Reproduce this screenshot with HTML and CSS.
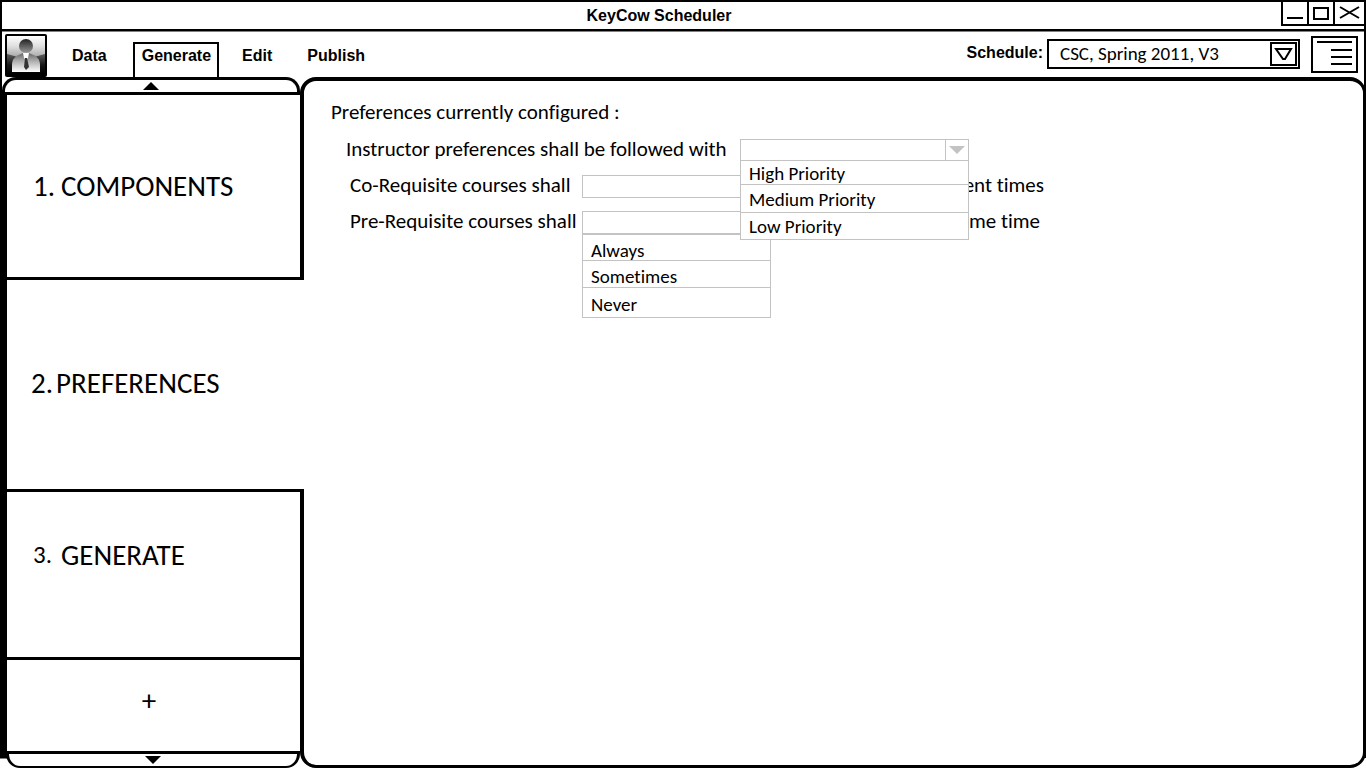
FILE: index.html
```html
<!DOCTYPE html>
<html lang="en">
<head>
<meta charset="utf-8">
<title>KeyCow Scheduler</title>
<link rel="stylesheet" href="styles.css">
</head>
<body>
<div class="app">
  <header class="titlebar">
    <h1 class="title">KeyCow Scheduler</h1>
    <div class="window-controls">
      <button class="window-button" type="button" aria-label="Minimize"><svg width="24" height="22" viewBox="0 0 24 22"><path d="M4 16h16" stroke="#000" stroke-width="2"/></svg></button>
      <button class="window-button" type="button" aria-label="Maximize"><svg width="24" height="22" viewBox="0 0 24 22"><path d="M5 6h14v11H5z" fill="none" stroke="#000" stroke-width="2"/></svg></button>
      <button class="window-button" type="button" aria-label="Close"><svg width="29" height="22" viewBox="0 0 29 22"><path d="M5 5l19 11M5 16L24 5" stroke="#000" stroke-width="2"/></svg></button>
    </div>
  </header>

  <div class="toolbar">
    <button class="user" type="button" aria-label="User">
      <svg width="42" height="43" viewBox="0 0 42 43">
        <defs>
          <linearGradient id="gloss" x1="0" y1="0" x2="0" y2="1"><stop offset="0" stop-color="#fff"/><stop offset=".5" stop-color="#ddd"/><stop offset="1" stop-color="#a5a5a5"/></linearGradient>
          <linearGradient id="dark" x1="0" y1="0" x2="0" y2="1"><stop offset="0" stop-color="#6a6a6a"/><stop offset=".6" stop-color="#151515"/><stop offset="1" stop-color="#000"/></linearGradient>
          <linearGradient id="head" x1="0" y1="0" x2="0" y2="1"><stop offset="0" stop-color="#222"/><stop offset="1" stop-color="#999"/></linearGradient>
          <linearGradient id="body" x1="0" y1="0" x2="0" y2="1"><stop offset="0" stop-color="#666"/><stop offset=".4" stop-color="#aaa"/><stop offset="1" stop-color="#fff"/></linearGradient>
        </defs>
        <rect width="42" height="43" rx="2"/>
        <rect x="2" y="18" width="38" height="22" fill="url(#dark)"/>
        <path d="M2 2h38v18Q21 27 2 20z" fill="url(#gloss)"/>
        <path d="M7 38v-7c0-6 3-9 11-12h6c8 3 11 6 11 12v7z" fill="url(#body)"/>
        <circle cx="21" cy="12" r="7" fill="url(#head)"/>
        <path d="M18 19h6l-1 5-2 2-2-2z" fill="#fff"/>
        <path d="M20 24h2l2 9-3 3-2-3z" fill="#333"/>
      </svg>
    </button>
    <nav class="tabs" aria-label="Main">
      <a class="tab" href="#data">Data</a>
      <a class="tab tab-active" href="#generate" aria-current="page">Generate</a>
      <a class="tab" href="#edit">Edit</a>
      <a class="tab" href="#publish">Publish</a>
    </nav>
    <div class="schedule">
      <label class="schedule-label" for="schedule">Schedule:</label>
      <div class="schedule-box">
        <select class="schedule-select" id="schedule"><option>CSC, Spring 2011, V3</option></select>
        <svg class="schedule-arrow" width="27" height="24" viewBox="0 0 27 24"><path d="M1 1h25v22H1z" fill="#fff" stroke="#000" stroke-width="2"/><path d="M6 7h15l-6 10h-2z" fill="none" stroke="#000" stroke-width="2"/></svg>
      </div>
    </div>
    <button class="menu-button" type="button" aria-label="Menu"><svg width="47" height="37" viewBox="0 0 47 37"><path d="M1 1h45v35H1z" fill="none" stroke="#000" stroke-width="2"/><path d="M6 6h35M20 14h21M20 21h21M20 28h21" stroke="#000" stroke-width="2"/></svg></button>
  </div>

  <div class="workspace">
    <aside class="sidebar">
      <div class="cap-top"><button class="cap" type="button" aria-label="Scroll up"><svg width="16" height="8" viewBox="0 0 16 8"><path d="M0 8l8-8 8 8z"/></svg></button></div>
      <div class="steps">
        <button class="step" type="button"><span class="step-number">1.</span><span>COMPONENTS</span></button>
        <button class="step step-active" type="button" aria-current="step"><span class="step-number">2.</span><span>PREFERENCES</span></button>
        <button class="step step-generate" type="button"><span class="step-number">3.</span><span>GENERATE</span></button>
        <button class="step step-add" type="button" aria-label="Add step">+</button>
      </div>
      <button class="cap cap-bottom" type="button" aria-label="Scroll down"><svg width="16" height="8" viewBox="0 0 16 8"><path d="M0 0h16L8 8z"/></svg></button>
    </aside>

    <main class="content">
      <h2 class="heading">Preferences currently configured :</h2>
      <div class="row row-wide">
        <label for="instructor">Instructor preferences shall be followed with</label>
        <div class="picker">
          <select class="picker-select" id="instructor"><option></option></select>
          <svg class="picker-arrow" width="24" height="22" viewBox="0 0 24 22"><path d="M0 0h1v22H0zM4 7h16l-8 8z" fill="#c3c3c3"/></svg>
          <ul class="options options-priority">
            <li><button class="option" type="button">High Priority</button></li>
            <li><button class="option" type="button">Medium Priority</button></li>
            <li><button class="option" type="button">Low Priority</button></li>
          </ul>
        </div>
      </div>
      <div class="row">
        <label for="corequisite">Co-Requisite courses shall</label>
        <div class="picker"><select class="picker-select" id="corequisite"><option></option></select></div>
        <span class="row-end">different times</span>
      </div>
      <div class="row row-last">
        <label for="prerequisite">Pre-Requisite courses shall</label>
        <div class="picker">
          <select class="picker-select" id="prerequisite"><option></option></select>
          <ul class="options">
            <li><button class="option" type="button">Always</button></li>
            <li><button class="option" type="button">Sometimes</button></li>
            <li><button class="option" type="button">Never</button></li>
          </ul>
        </div>
        <span class="row-end">same time</span>
      </div>
    </main>
  </div>
</div>
</body>
</html>
```
FILE: styles.css
```css
* { box-sizing: border-box; }
body {
  margin: 0;
  background: #fff;
  color: #000;
  font-family: Carlito, Lato, sans-serif;
  font-size: 21px;
  font-variant-ligatures: none;
}
button, select {
  margin: 0;
  padding: 0;
  border: 0;
  background: none;
  color: inherit;
  font: inherit;
  font-variant-ligatures: none;
}
svg { display: block; }
h1, h2 { margin: 0; }

.app {
  display: flex;
  flex-direction: column;
  min-height: 100vh;
}

.titlebar {
  display: grid;
  grid-template-columns: 1fr auto 1fr;
  height: 32px;
  border: solid #000;
  border-width: 2px 2px 0;
  box-shadow: inset 0 -1px #808080, inset 0 -3px #000;
}
.title {
  grid-column: 2;
  padding-right: 48px;
  font: bold 16px/28px "Liberation Sans", Arial, sans-serif;
}
.window-controls {
  display: flex;
  justify-self: end;
  height: 24px;
}
.window-button {
  border: solid #000;
  border-width: 0 0 2px 2px;
}

.toolbar {
  display: flex;
  align-items: flex-start;
  height: 45px;
  padding-right: 6px;
  border: solid #000;
  border-width: 0 2px;
  font: bold 16px/24px "Liberation Sans", Arial, sans-serif;
}
.user { margin: 2px 0 0 3px; }
.tabs {
  display: flex;
  align-self: flex-end;
  margin-left: 16px;
}
.tab {
  height: 35px;
  padding: 0 6px 0 7px;
  border: 2px solid transparent;
  border-bottom: 0;
  color: inherit;
  text-decoration: none;
}
.tab:first-child, .tab:last-child { margin: 0 18px; }
.tab:first-child { margin-left: 0; }
.tab-active { border-color: #000; margin-right: 14px; }
.schedule {
  display: flex;
  margin: 7px 11px 0 auto;
  gap: 4px;
}
.schedule-label { padding-top: 2px; }
.schedule-box {
  position: relative;
  width: 253px;
  font: 19px/26px Carlito, Lato, sans-serif;
}
.schedule-select {
  width: 100%;
  height: 30px;
  padding: 0 32px 0 11px;
  border: 2px solid #000;
  appearance: none;
}
.schedule-arrow {
  position: absolute;
  top: 3px;
  right: 3px;
  pointer-events: none;
}
.menu-button { margin-top: 4px; }

/* The frame's side edges stop short of the rounded bottom corners. */
.workspace {
  display: flex;
  flex: 1;
  background:
    linear-gradient(#000, #000) left 0 bottom 10px / 7px 50% no-repeat,
    linear-gradient(#000, #000) right 0 bottom 10px / 2px 100% no-repeat;
}
.sidebar {
  display: flex;
  flex: 0 0 300px;
  flex-direction: column;
}
.cap-top { border-left: 2px solid #000; }
.cap {
  display: flex;
  width: 100%;
  height: 15px;
  align-items: center;
  justify-content: center;
  border: solid #000;
  border-width: 3px 3px 0;
  border-radius: 14px 14px 0 0;
  background: #fff;
}
.steps {
  display: grid;
  flex: 1;
  grid-template-rows: 185fr 209fr 171fr 94fr;
  border-top: 3px solid #000;
  border-left: 7px solid #000;
}
.step {
  display: flex;
  align-items: center;
  padding-left: 26px;
  border-bottom: 3px solid #000;
  font-size: 29px;
  line-height: 32px;
}
.step-number { width: 28px; text-align: left; }
.step-active {
  position: relative;
  z-index: 1;
  margin-right: -4px;
  padding: 0 0 4px 24px;
  border: 0;
  background: #fff;
}
.step-active .step-number { width: 25px; }
.step-generate {
  padding-bottom: 40px;
  border-top: 3px solid #000;
}
.step-generate .step-number { font-size: 25px; }
.step-add {
  justify-content: center;
  padding: 0 9px 12px 0;
}
.cap-bottom {
  width: auto;
  height: 14px;
  margin-left: 6px;
  border-width: 0 3px 2px;
  border-radius: 0 0 14px 14px;
}

.content {
  flex: 1;
  min-width: 0;
  padding: 17px 27px;
  border: solid #000;
  border-width: 4px 3px 3px 4px;
  border-radius: 16px;
}
.heading {
  margin-bottom: 6px;
  font-size: 21px;
  font-weight: 400;
  line-height: 28px;
}
.row {
  display: grid;
  grid-template-columns: 232px 189px 1fr;
  align-items: center;
  width: 713px;
  height: 36px;
  padding-left: 19px;
  line-height: 24px;
  white-space: nowrap;
}
.row label, .row-end { padding-bottom: 2px; }
.row-wide {
  grid-template-columns: 394px 229px;
  padding-left: 15px;
}
.row-last { width: 709px; }
.row-end { justify-self: end; }
.picker { position: relative; }
.picker-select {
  display: block;
  width: 100%;
  height: 23px;
  border: 1px solid #c3c3c3;
  background: #fff;
  appearance: none;
}
.picker-arrow {
  position: absolute;
  top: 0;
  right: 0;
  pointer-events: none;
}
.options {
  display: grid;
  grid-template-rows: 25px 27px 30px;
  position: absolute;
  top: 100%;
  left: 0;
  width: 100%;
  margin: 0;
  padding: 0;
  border: 1px solid #c3c3c3;
  background: #fff;
  list-style: none;
}
.options-priority {
  z-index: 2;
  top: 21px;
  grid-template-rows: 23px 28px 27px;
}
.options li { display: flex; }
.options li + li { border-top: 1px solid #c3c3c3; }
.option {
  flex: 1;
  padding: 6px 8px 0;
  font-size: 19px;
  line-height: 20px;
  text-align: left;
}
.options-priority .option { padding-top: 3px; }
```
